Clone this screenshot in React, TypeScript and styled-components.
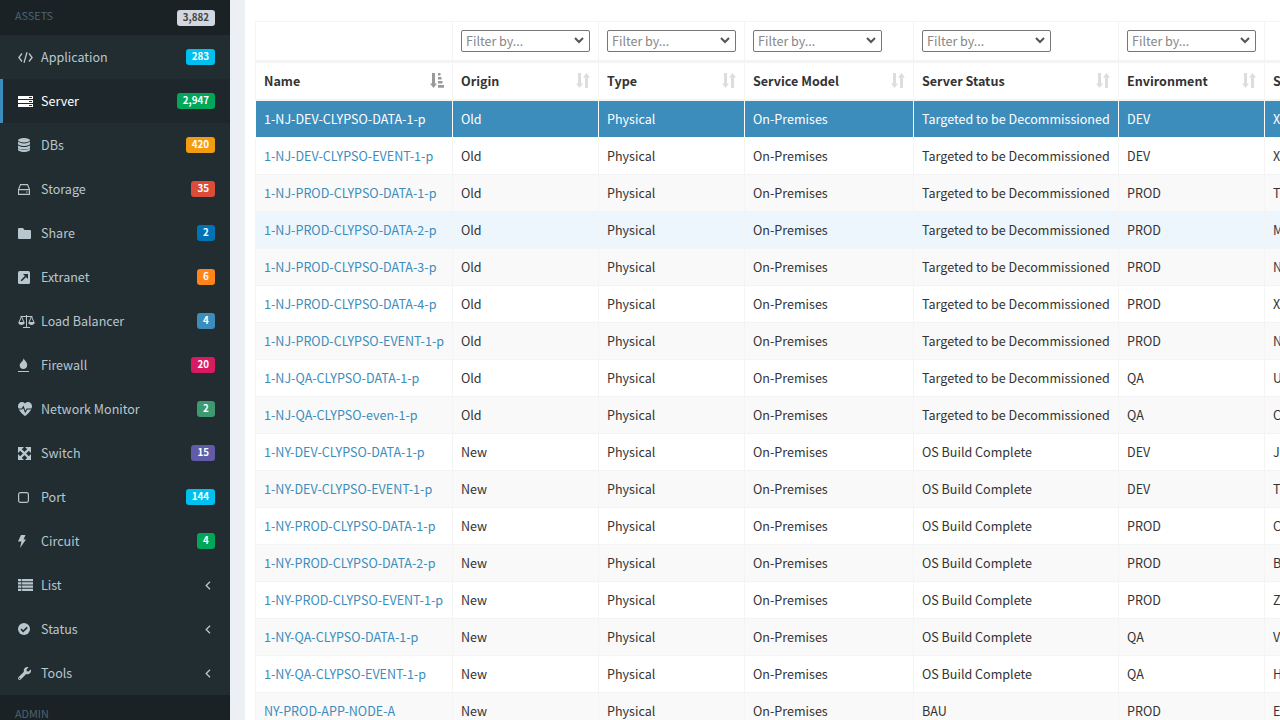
import React from 'react';
import styled, { createGlobalStyle } from 'styled-components';
import { FaWrench } from 'react-icons/fa';

const Global = createGlobalStyle`
  html, body { margin: 0; padding: 0; height: 100%; overflow: hidden; background: #ecf0f5; }
  body { font-family: "Noto Sans CJK SC", "Noto Sans", sans-serif; font-size: 12.55px; color: #333; }
  * { box-sizing: border-box; }
`;
const Page = styled.div`display: flex; width: 1280px; height: 720px; overflow: hidden;`;
const Sidebar = styled.aside`width: 230px; flex: none; background: #222d32; overflow: hidden;`;
const SectionHead = styled.div<{ $top?: number; $bottom?: number }>`
  height: 35px; background: #1a2226; color: #4b646f; font-size: 10.8px; display: flex; align-items: center; justify-content: space-between;
  padding: ${p => p.$top ?? 0}px 15px ${p => p.$bottom ?? 0}px 15px;
`;
const NavItem = styled.div<{ $active?: boolean }>`
  height: 44px; display: flex; align-items: center; padding: 0 15px 0 ${p => (p.$active ? 15 : 18)}px;
  border-left: ${p => (p.$active ? '3px solid #3c8dbc' : 'none')};
  background: ${p => (p.$active ? '#1e282c' : 'transparent')};
  color: ${p => (p.$active ? '#fff' : '#b8c7ce')};
`;
const IconSlot = styled.span`width: 23px; display: flex; align-items: center; flex: none;`;
const Label = styled.span`flex: 1; padding-bottom: 2px;`;
const Badge = styled.span<{ $bg: string; $fg?: string }>`
  background: ${p => p.$bg}; color: ${p => p.$fg ?? '#fff'}; font-size: 9.8px; font-weight: 700; line-height: 14px; height: 16px;
  padding: 0 6px; border-radius: 3px; min-width: 18px; text-align: center;
`;
const TotalBadge = styled(Badge)`margin-top: 5px;`;
const ChevronBox = styled.svg`margin-right: 4px; flex: none;`;
const Gutter = styled.div`width: 15px; flex: none; background: #ecf0f5;`;
const Content = styled.main`flex: 1; min-width: 0; background: #fff; padding: 21px 0 0 10px; overflow: hidden;`;
const Table = styled.table`border-collapse: collapse; table-layout: fixed; width: 1209px; color: #333;`;
const FilterCell = styled.th`height: 40px; border: 1px solid #f4f4f4; padding: 0 8px; font-weight: 400; text-align: left;`;
const FakeSelect = styled.div`width: 129px; height: 22px; border: 1px solid #767676; border-radius: 2px; background: #fff; color: #888; display: flex; align-items: center; justify-content: space-between; padding: 0 5px 2px 4px; font-size: 12.55px;`;
const HeadCell = styled.th`height: 39px; border: 1px solid #f4f4f4; border-top: 3px solid #f4f4f4; box-shadow: inset 0 -1px 0 #f4f4f4; padding: 0 8px 2px; text-align: left; font-weight: 700; white-space: nowrap;`;
const HeadInner = styled.div`display: flex; align-items: center; justify-content: space-between;`;
const Row = styled.tr<{ $sel?: boolean; $odd?: boolean; $hover?: boolean }>`
  height: 37px;
  background: ${p => (p.$sel ? '#3c8dbc' : p.$hover ? '#edf5fd' : p.$odd ? '#f9f9f9' : '#fff')};
  color: ${p => (p.$sel ? '#fff' : '#333')};
`;
const Cell = styled.td`border: 1px solid #f4f4f4; padding: 0 8px 2px; white-space: nowrap; overflow: hidden;`;
const SelCell = styled(Cell)`border-color: #fff;`;
const Link = styled.a<{ $sel?: boolean }>`color: ${p => (p.$sel ? '#fff' : '#3c8dbc')}; text-decoration: none;`;

const SortIcon = ({ active }: { active?: boolean }) => (
  <svg width="14" height="15" viewBox="0 0 14 15" fill={active ? '#999' : '#ddd'}>
    <path d="M2 0h3v10.5h2L3.5 15 0 10.5h2z" />
    {active ? <path d="M8 0h2.5v2.5H8zM8 4h3.5v2.5H8zM8 8h4.5v2.5H8zM8 12h6v2.8H8z" /> : <path d="M9 15h3V4.5h2L10.5 0 7 4.5h2z" />}
  </svg>
);
const SelArrow = () => (
  <svg width="10" height="7" viewBox="0 0 10 7" fill="none" stroke="#555" strokeWidth="2"><path d="M1 1l4 4 4-4" /></svg>
);
const Chevron = () => (
  <ChevronBox width="6" height="9" viewBox="0 0 6 9" fill="none" stroke="#b8c7ce" strokeWidth="1.3"><path d="M5 .8L1.2 4.5 5 8.2" /></ChevronBox>
);

const Glyph = ({ w, h, children }: { w: number; h: number; children: React.ReactNode }) => (
  <svg width={w} height={h} viewBox={`0 0 ${w} ${h}`} fill="currentColor">{children}</svg>
);
const DARK = '#222d32';
const icons: Record<string, React.ReactNode> = {
  Application: <Glyph w={15} h={11}><path d="M4 1.5L.9 5.5 4 9.5M11 1.5l3.1 4-3.1 4M9 .3L6 10.7" fill="none" stroke="currentColor" strokeWidth="1.3" /></Glyph>,
  Server: <Glyph w={15} h={11}><path d="M0 0h15v3H0zM0 4h15v3H0zM0 8h15v3H0z" /><path d="M11 1h3v1h-3zM11 5h3v1h-3zM11 9h3v1h-3z" fill="#1e282c" /></Glyph>,
  DBs: <Glyph w={12} h={14}><ellipse cx="6" cy="2.2" rx="6" ry="2.2" /><path d="M0 3.6v2.2c0 1.2 2.7 2.2 6 2.2s6-1 6-2.2V3.6c-1 1.2-3.3 1.8-6 1.8S1 4.8 0 3.6zM0 7.2v2.2c0 1.2 2.7 2.2 6 2.2s6-1 6-2.2V7.2c-1 1.2-3.3 1.8-6 1.8S1 8.4 0 7.2zM0 10.2v1.6C0 13 2.7 14 6 14s6-1 6-2.2v-1.6c-1 1.2-3.3 1.8-6 1.8s-5-.6-6-1.8z" /></Glyph>,
  Storage: <Glyph w={12} h={11}><path d="M2.5.6h7l2 5v4.8H.5V5.6zM.5 5.6h11" fill="none" stroke="currentColor" strokeWidth="1.1" /><path d="M8 7.5h1v1H8zM9.6 7.5h1v1h-1z" /></Glyph>,
  Share: <Glyph w={13} h={11}><path d="M1 0h4l1.5 2H12a1 1 0 0 1 1 1v7a1 1 0 0 1-1 1H1a1 1 0 0 1-1-1V1a1 1 0 0 1 1-1z" /></Glyph>,
  Extranet: <Glyph w={12} h={13}><rect width="12" height="13" rx="1.5" /><path d="M3.2 9.8L7.6 5.4" stroke={DARK} strokeWidth="1.6" /><path d="M5 3h5v5z" fill={DARK} /></Glyph>,
  'Load Balancer': <Glyph w={17} h={14}><path d="M8.5 1v12M5 13.5h7M2.5 2.5h12M3.5 2.5L.9 8.5h5.2zM13.5 2.5l-2.6 6h5.2z" fill="none" stroke="currentColor" strokeWidth="1" /><path d="M.3 8.5h6.4c0 1.6-1.4 2.5-3.2 2.5S.3 10.1.3 8.5zM10.3 8.5h6.4c0 1.6-1.4 2.5-3.2 2.5s-3.2-.9-3.2-2.5z" /></Glyph>,
  Firewall: <Glyph w={11} h={14}><path d="M5.5 0c.3 2 3.7 3.5 3.7 7 0 2.4-1.8 4-3.9 4C3.2 11 1.7 9.4 1.7 7.4 1.7 4.5 6 3 5.5 0z" /><path d="M0 13h11v1H0z" /></Glyph>,
  'Network Monitor': <Glyph w={14} h={14}><path d="M7 14C5 12.5 0 8.5 0 4.2 0 1.8 1.8 0 4 0c1.3 0 2.3.6 3 1.6C7.7.6 8.7 0 10 0c2.2 0 4 1.8 4 4.2C14 8.5 9 12.5 7 14z" /><path d="M0 7h4l1.3-2.3L7.3 10 9 7h5" fill="none" stroke={DARK} strokeWidth="1.1" /></Glyph>,
  Switch: <Glyph w={13} h={13}><path d="M2 2l9 9M11 2l-9 9" stroke="currentColor" strokeWidth="2.4" /><path d="M0 0h6L0 6zM13 0v6L7 0zM0 13V7l6 6zM13 13H7l6-6z" /></Glyph>,
  Port: <Glyph w={11} h={11}><rect x=".6" y=".6" width="9.8" height="9.8" rx="1.8" fill="none" stroke="currentColor" strokeWidth="1.2" /></Glyph>,
  Circuit: <Glyph w={8} h={13}><path d="M3 0h4.5L5.5 4.5H8L2 13l1.5-6.5H0z" /></Glyph>,
  List: <Glyph w={15} h={12}><path d="M0 0h15v2.2H0zM0 3.3h15v2.2H0zM0 6.6h15v2.2H0zM0 9.8h15V12H0z" /><path d="M3.4 0h.7v12h-.7z" fill={DARK} /></Glyph>,
  Status: <Glyph w={12} h={12}><circle cx="6" cy="6" r="6" /><path d="M3 6.2l2.2 2.2 4-4" fill="none" stroke={DARK} strokeWidth="1.7" /></Glyph>,
  Tools: <FaWrench size={13} />,
};

const nav: { n: string; b?: string; c?: string; active?: boolean }[] = [
  { n: 'Application', b: '283', c: '#00c0ef' },
  { n: 'Server', b: '2,947', c: '#00a65a', active: true },
  { n: 'DBs', b: '420', c: '#f39c12' },
  { n: 'Storage', b: '35', c: '#dd4b39' },
  { n: 'Share', b: '2', c: '#0073b7' },
  { n: 'Extranet', b: '6', c: '#ff851b' },
  { n: 'Load Balancer', b: '4', c: '#3c8dbc' },
  { n: 'Firewall', b: '20', c: '#d81b60' },
  { n: 'Network Monitor', b: '2', c: '#3d9970' },
  { n: 'Switch', b: '15', c: '#605ca8' },
  { n: 'Port', b: '144', c: '#00c0ef' },
  { n: 'Circuit', b: '4', c: '#00a65a' },
  { n: 'List' },
  { n: 'Status' },
  { n: 'Tools' },
];
const cols = [197, 146, 146, 169, 205, 146, 200];
const heads = ['Name', 'Origin', 'Type', 'Service Model', 'Server Status', 'Environment', 'Site'];
const T = 'Targeted to be Decommissioned', O = 'OS Build Complete';
const rows: [string, string, string, string, string][] = [
  ['1-NJ-DEV-CLYPSO-DATA-1-p', 'Old', T, 'DEV', 'X'],
  ['1-NJ-DEV-CLYPSO-EVENT-1-p', 'Old', T, 'DEV', 'X'],
  ['1-NJ-PROD-CLYPSO-DATA-1-p', 'Old', T, 'PROD', 'T'],
  ['1-NJ-PROD-CLYPSO-DATA-2-p', 'Old', T, 'PROD', 'M'],
  ['1-NJ-PROD-CLYPSO-DATA-3-p', 'Old', T, 'PROD', 'N'],
  ['1-NJ-PROD-CLYPSO-DATA-4-p', 'Old', T, 'PROD', 'X'],
  ['1-NJ-PROD-CLYPSO-EVENT-1-p', 'Old', T, 'PROD', 'N'],
  ['1-NJ-QA-CLYPSO-DATA-1-p', 'Old', T, 'QA', 'U'],
  ['1-NJ-QA-CLYPSO-even-1-p', 'Old', T, 'QA', 'C'],
  ['1-NY-DEV-CLYPSO-DATA-1-p', 'New', O, 'DEV', 'J'],
  ['1-NY-DEV-CLYPSO-EVENT-1-p', 'New', O, 'DEV', 'T'],
  ['1-NY-PROD-CLYPSO-DATA-1-p', 'New', O, 'PROD', 'C'],
  ['1-NY-PROD-CLYPSO-DATA-2-p', 'New', O, 'PROD', 'B'],
  ['1-NY-PROD-CLYPSO-EVENT-1-p', 'New', O, 'PROD', 'Z'],
  ['1-NY-QA-CLYPSO-DATA-1-p', 'New', O, 'QA', 'V'],
  ['1-NY-QA-CLYPSO-EVENT-1-p', 'New', O, 'QA', 'H'],
  ['NY-PROD-APP-NODE-A', 'New', 'BAU', 'PROD', 'E'],
];

export default function App() {
  return (
    <Page>
      <Global />
      <Sidebar>
        <SectionHead $bottom={5}>ASSETS<TotalBadge $bg="#d2d6de" $fg="#444">3,882</TotalBadge></SectionHead>
        {nav.map(x => (
          <NavItem key={x.n} $active={x.active}>
            <IconSlot>{icons[x.n]}</IconSlot>
            <Label>{x.n}</Label>
            {x.b ? <Badge $bg={x.c!}>{x.b}</Badge> : <Chevron />}
          </NavItem>
        ))}
        <SectionHead $top={1}>ADMIN</SectionHead>
      </Sidebar>
      <Gutter />
      <Content>
        <Table>
          <colgroup>{cols.map((w, i) => <col key={i} style={{ width: w }} />)}</colgroup>
          <thead>
            <tr>
              <FilterCell />
              {heads.slice(1, 6).map(h => (
                <FilterCell key={h}><FakeSelect>Filter by...<SelArrow /></FakeSelect></FilterCell>
              ))}
              <FilterCell />
            </tr>
            <tr>
              {heads.map((h, i) => (
                <HeadCell key={h}><HeadInner>{h}<SortIcon active={i === 0} /></HeadInner></HeadCell>
              ))}
            </tr>
          </thead>
          <tbody>
            {rows.map((r, i) => {
              const C = i === 0 ? SelCell : Cell;
              return (
                <Row key={r[0]} $sel={i === 0} $odd={i % 2 === 0} $hover={i === 3}>
                  <C><Link $sel={i === 0} href="#">{r[0]}</Link></C>
                  <C>{r[1]}</C>
                  <C>Physical</C>
                  <C>On-Premises</C>
                  <C>{r[2]}</C>
                  <C>{r[3]}</C>
                  <C>{r[4]}</C>
                </Row>
              );
            })}
          </tbody>
        </Table>
      </Content>
    </Page>
  );
}
